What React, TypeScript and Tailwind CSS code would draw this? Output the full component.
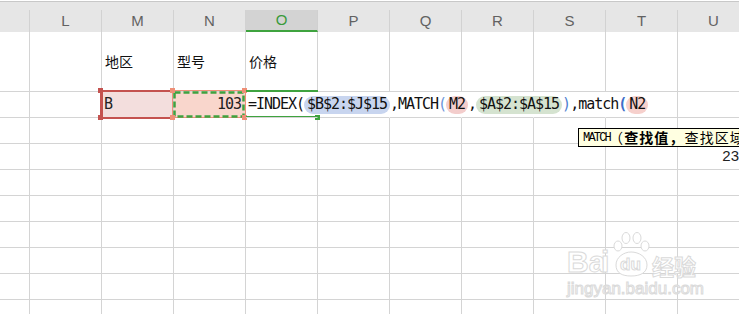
import React from 'react';

const COLS = ['K', 'L', 'M', 'N', 'O', 'P', 'Q', 'R', 'S', 'T', 'U'];
const GRID = 'grid grid-cols-[30px_repeat(10,72px)]';
const MONO = "font-['DejaVu_Sans_Mono',monospace] text-[15px] tracking-[-1.03px]";
const CJK = "font-['Noto_Sans_CJK_SC',sans-serif]";

function HeaderRow() {
  return (
    <div className={GRID + ' bg-[#e6e6e6]'}>
      {COLS.map((c) =>
        c === 'O' ? (
          <div
            key={c}
            className="h-[22px] border-r border-[#d0d0d0] border-b-2 border-b-[#3fa33f] bg-[#d3d3d3] flex items-center justify-center text-[15px] text-[#3a9a3a]"
          >
            {c}
          </div>
        ) : (
          <div
            key={c}
            className="h-[22px] border-r border-[#d2d2d2] flex items-center justify-center text-[15px] text-[#626262]"
          >
            {c === 'K' ? '' : c}
          </div>
        )
      )}
    </div>
  );
}

function Row1() {
  const text: Record<string, string> = { M: '地区', N: '型号', O: '价格' };
  return (
    <div className={GRID}>
      {COLS.map((c) => (
        <div
          key={c}
          className={`h-[60px] border-r border-b border-[#d4d4d4] flex items-center pl-[3px] text-[14px] text-[#111] ${CJK}`}
        >
          {text[c] ?? ''}
        </div>
      ))}
    </div>
  );
}

function Hl({ bg, children }: { bg: string; children: React.ReactNode }) {
  return (
    <span className={`inline-flex h-[18px] items-center rounded-full px-[3px] ${bg}`}>{children}</span>
  );
}

function Row2() {
  return (
    <div className={GRID}>
      {COLS.map((c) => {
        if (c === 'M')
          return (
            <div key={c} className={`h-[26px] border-r border-b border-[#d4d4d4] bg-[#f3dedd] flex items-center pl-[2px] text-[#222] ${MONO}`}>
              B
            </div>
          );
        if (c === 'N')
          return (
            <div key={c} className={`h-[26px] border-r border-b border-[#d4d4d4] bg-[#f9d6cc] flex items-center justify-end pr-[4px] text-[#222] ${MONO}`}>
              103
            </div>
          );
        if (c === 'O')
          return (
            <div key={c} className="relative z-10 h-[26px] border-b border-r border-r-transparent border-b-[#d4d4d4]">
              <div className={`flex h-[25px] items-center whitespace-nowrap pl-[2px] text-[#111] ${MONO}`}>
                <span>=INDEX(</span>
                <Hl bg="bg-[#c8d5ef]">$B$2:$J$15</Hl>
                <span>,MATCH</span>
                <span className="text-[#6b95da]">(</span>
                <Hl bg="bg-[#f3cdcc]">M2</Hl>
                <span>,</span>
                <Hl bg="bg-[#d5e3d0]">$A$2:$A$15</Hl>
                <span className="text-[#4f7fd0]">)</span>
                <span>,match</span>
                <span className="font-bold text-[#3d6ec9]">(</span>
                <Hl bg="bg-[#f6d0cc]">N2</Hl>
              </div>
            </div>
          );
        const hide = c === 'P' || c === 'Q' || c === 'R' || c === 'S';
        return (
          <div
            key={c}
            className={`h-[26px] border-r border-b border-[#d4d4d4] ${hide ? 'border-r-transparent' : ''}`}
          />
        );
      })}
    </div>
  );
}

function PlainRow({ u }: { u?: string }) {
  return (
    <div className={GRID}>
      {COLS.map((c) => (
        <div
          key={c}
          className="h-[26px] border-r border-b border-[#d4d4d4] flex items-center justify-end pr-[10px] text-[15px] text-[#222] font-['Liberation_Sans',sans-serif]"
        >
          {c === 'U' && u ? u : ''}
        </div>
      ))}
    </div>
  );
}

const WM = 'text-white [-webkit-text-stroke:1px_#dadada]';

export default function App() {
  return (
    <div className="relative w-[739px] h-[314px] overflow-hidden bg-white font-['Liberation_Sans',sans-serif]">
      <div className="mt-px h-[9px] border-t border-[#c8c8c8] bg-[#e6e6e6]" />
      <HeaderRow />
      <Row1 />
      <Row2 />
      <PlainRow />
      <PlainRow u="23" />
      <PlainRow />
      <PlainRow />
      <PlainRow />
      <PlainRow />
      <PlainRow />
      <PlainRow />

      {/* M2 selection (red) */}
      <div className="absolute left-[100px] top-[90px] w-[72px] h-[29px] border-l-[3px] border-t-2 border-b-2 border-[#c4524f]" />
      <div className="absolute left-[98px] top-[88px] w-[5px] h-[5px] bg-[#c4524f]" />
      <div className="absolute left-[98px] top-[115px] w-[5px] h-[5px] bg-[#c4524f]" />

      {/* N2 selection (salmon + green marching ants) */}
      <div className="absolute left-[172px] top-[90px] w-[74px] h-[28px] border border-[#ee907a]" />
      <svg className="absolute left-[173px] top-[91px]" width="72" height="27" viewBox="0 0 72 27">
        <rect x="1.5" y="1.5" width="69" height="24" fill="none" stroke="#3fa23f" strokeWidth="2.5" strokeDasharray="6 3" />
      </svg>
      <div className="absolute left-[170px] top-[88px] w-[5px] h-[5px] bg-[#ef8f77]" />
      <div className="absolute left-[170px] top-[115px] w-[5px] h-[5px] bg-[#ef8f77]" />
      <div className="absolute left-[242px] top-[88px] w-[5px] h-[5px] bg-[#ef8f77]" />
      <div className="absolute left-[242px] top-[115px] w-[5px] h-[5px] bg-[#ef8f77]" />

      {/* O2 active cell (green) */}
      <div className="absolute left-[246px] top-[90px] w-[72px] h-[2px] bg-[#3fa33f]" />
      <div className="absolute left-[246px] top-[116px] w-[70px] h-[2px] bg-[#3fa33f]" />
      <div className="absolute left-[315px] top-[115px] w-[5px] h-[5px] bg-[#3fa33f]" />

      {/* Tooltip */}
      <div className="absolute left-[578px] top-[128px] h-[19px] w-[180px] border border-black bg-[#ffffe1] flex items-center whitespace-nowrap pl-[4px] text-black">
        <span className="font-['Liberation_Mono',monospace] text-[12px] tracking-[-1.8px]">MATCH</span>
        <span className={`${CJK} text-[14px] leading-[17px] tracking-[1.1px] -ml-[1px]`}>（</span>
        <span className={`${CJK} text-[14px] leading-[17px] tracking-[1.1px] font-bold`}>查找值，</span>
        <span className={`${CJK} text-[14px] leading-[17px] tracking-[1.1px]`}>查找区域</span>
      </div>

      {/* Baidu watermark */}
      <div className="absolute left-[565px] top-[231px] w-[140px] h-[70px] pointer-events-none">
        <span className={`absolute left-[2px] top-[16px] font-['Liberation_Sans',sans-serif] text-[30px] font-bold leading-[30px] ${WM}`}>
          Ba
        </span>
        <span className={`absolute left-[36px] top-[16px] font-['Liberation_Sans',sans-serif] text-[30px] font-bold leading-[30px] ${WM}`}>
          i
        </span>
        <svg className="absolute left-[45px] top-[0px]" width="44" height="46" viewBox="0 0 44 46">
          <g fill="white" stroke="#dadada" strokeWidth="1">
            <ellipse cx="8" cy="15" rx="4" ry="5" />
            <ellipse cx="16" cy="7" rx="4" ry="5.5" />
            <ellipse cx="27" cy="7" rx="4" ry="5.5" />
            <ellipse cx="35" cy="15" rx="4" ry="5" />
            <path d="M6 34 C6 26 14 21 21 21 C29 21 37 26 37 34 C37 42 30 45 21 45 C12 45 6 42 6 34 Z" />
          </g>
        </svg>
        <span className={`absolute left-[55px] top-[24px] font-['Liberation_Sans',sans-serif] text-[17px] font-bold leading-[20px] ${WM}`}>
          du
        </span>
        <span className={`absolute left-[87px] top-[22px] text-[22px] font-bold leading-[24px] ${WM} ${CJK}`}>
          经验
        </span>
        <span className={`absolute left-[2px] top-[48px] font-['Liberation_Sans',sans-serif] text-[17px] leading-[20px] ${WM}`}>
          jingyan.baidu.com
        </span>
      </div>
    </div>
  );
}
